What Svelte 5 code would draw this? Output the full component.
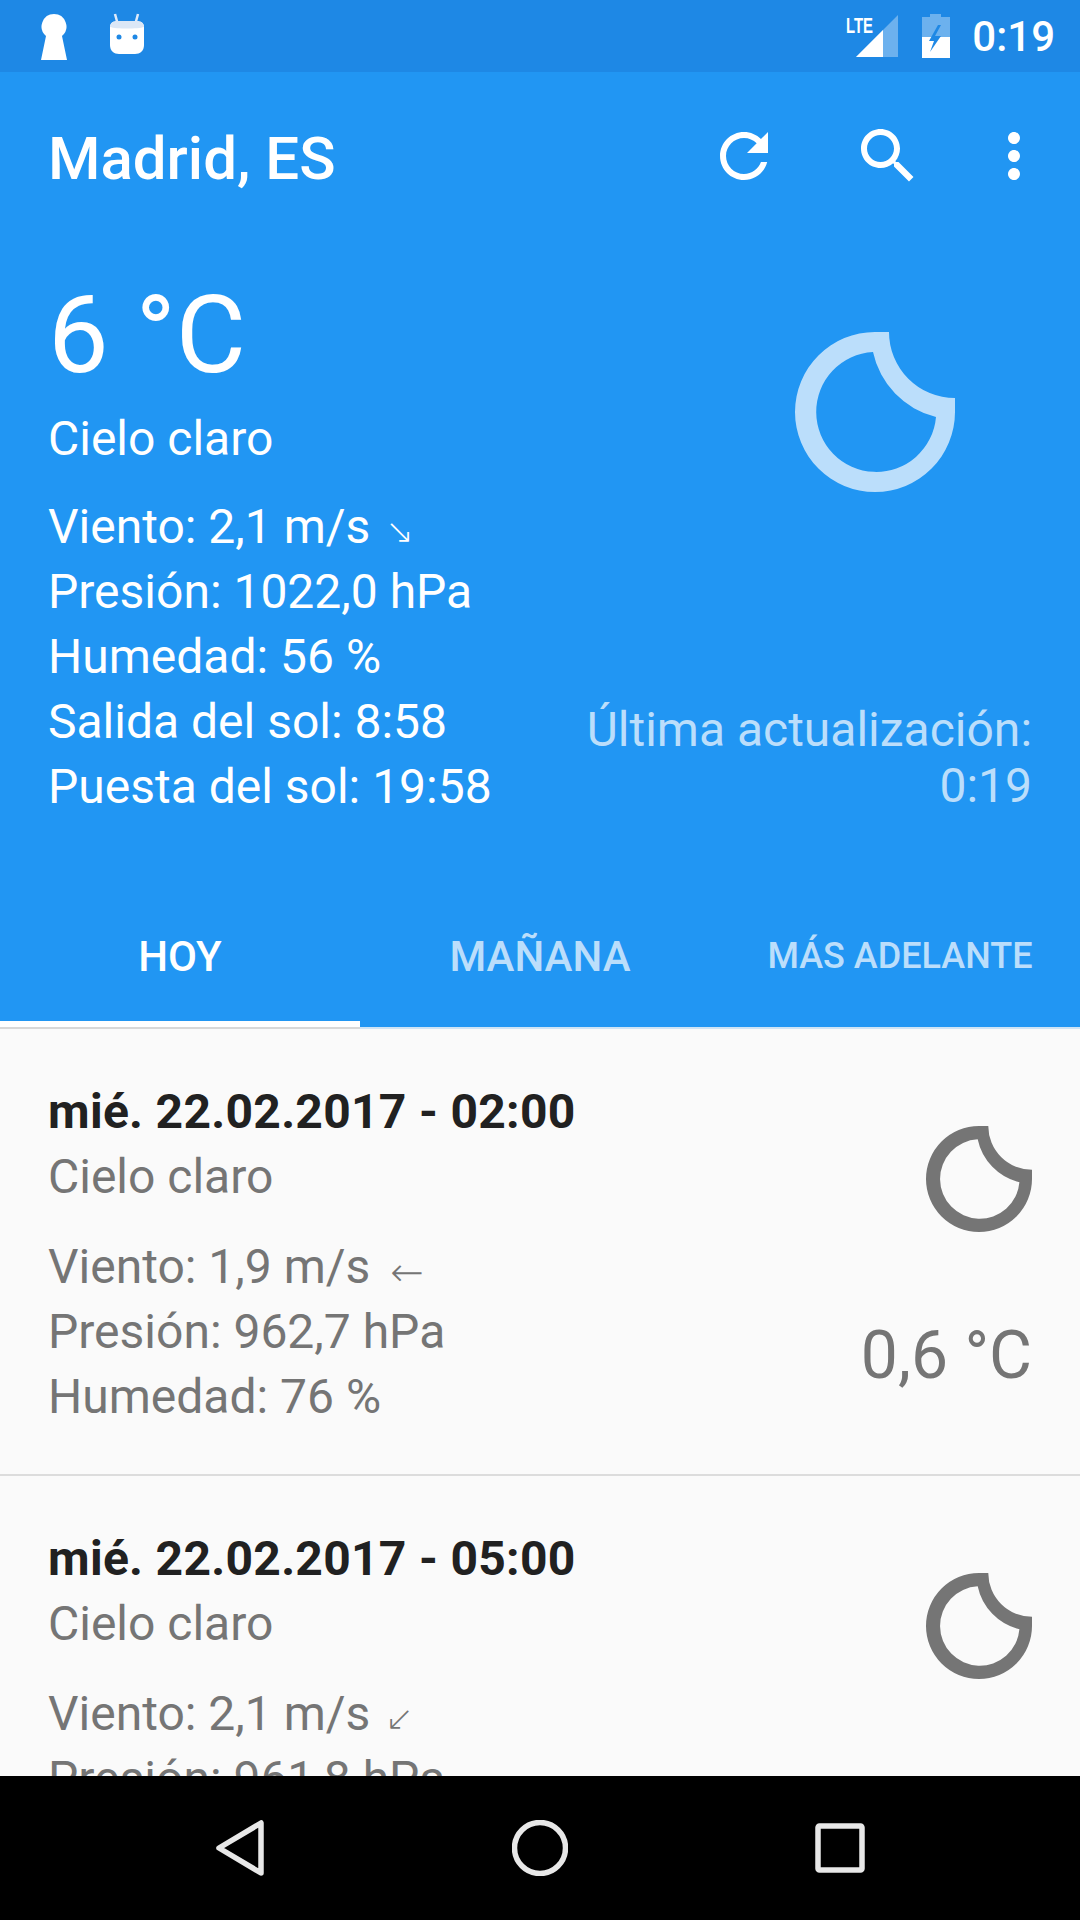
<script>
    const rows = [
        { date: 'mié. 22.02.2017 - 02:00', sky: 'Cielo claro', wind: 'Viento: 1,9 m/s', arrow: '←', press: 'Presión: 962,7 hPa', hum: 'Humedad: 76 %', temp: '0,6 °C' },
        { date: 'mié. 22.02.2017 - 05:00', sky: 'Cielo claro', wind: 'Viento: 2,1 m/s', arrow: '↙', press: 'Presión: 961,8 hPa', hum: 'Humedad: 76 %', temp: '' }
    ];
    const moon = 'M94 0H80A80 80 0 1 0 160 80V66A66 66 0 0 1 94 0ZM78 20A60 60 0 1 0 141 85A85 85 0 0 1 78 20Z';
</script>

<div class="screen">
    <div class="statusbar">
        <svg class="keyhole" width="28" height="48" viewBox="0 0 28 48"><path d="M14 1a12.500 12.500 0 0 1 8 22l5 24H1L6 23A12.500 12.500 0 0 1 14 1Z" fill="#fff" /></svg>
        <svg class="android" width="36" height="42" viewBox="0 0 36 42">
            <path d="M6 1l3 11M29 1l-3 11" stroke="#dfeafa" stroke-width="2.500" />
            <path d="M9 8h18c5 0 8 2 8 6v18c0 6-4 9-9 9H10c-5 0-9-3-9-9V14c0-4 3-6 8-6Z" fill="#fff" />
            <path d="M1 14c0-4 3-6 8-6h18c5 0 8 2 8 6-6 2-28 2-34 0Z" fill="#dbe7f6" />
            <circle cx="10" cy="24" r="2.500" fill="#1e88e5" /><circle cx="26" cy="24" r="2.500" fill="#1e88e5" />
        </svg>
        <span class="spacer"></span>
        <svg class="signal" width="56" height="44" viewBox="0 0 56 44">
            <text x="1" y="19" textLength="27" lengthAdjust="spacingAndGlyphs" class="lte">LTE</text>
            <path d="M53 1V43H11Z" fill="#fff" fill-opacity=".35" />
            <path d="M38 16V43H11Z" fill="#fff" />
        </svg>
        <svg class="battery" width="30" height="44" viewBox="0 0 30 44">
            <path d="M9 0h11v3h9v41H1V3h8Z" fill="#fff" fill-opacity=".35" />
            <path d="M1 23h28v21H1Z" fill="#fff" />
            <path d="M17 11L8 27h5L9 38l11-16h-6l6-11Z" fill="#1e88e5" />
        </svg>
        <span class="clock">0:19</span>
    </div>

    <header class="appheader">
        <div class="toolbar">
            <h1>Madrid, ES</h1>
            <button aria-label="Actualizar"><svg width="72" height="72" viewBox="0 0 24 24"><path fill="#fff" d="M17.65 6.35C16.2 4.9 14.21 4 12 4c-4.42 0-7.99 3.58-7.99 8s3.57 8 7.99 8c3.73 0 6.84-2.55 7.73-6h-2.08c-.82 2.33-3.04 4-5.65 4-3.31 0-6-2.69-6-6s2.69-6 6-6c1.66 0 3.14.69 4.22 1.78L13 11h7V4l-2.350 2.350z" /></svg></button>
            <button aria-label="Buscar"><svg width="72" height="72" viewBox="0 0 24 24"><path fill="#fff" d="M15.500 14h-.79l-.28-.27C15.410 12.590 16 11.110 16 9.500 16 5.910 13.090 3 9.500 3S3 5.910 3 9.500 5.910 16 9.500 16c1.610 0 3.090-.59 4.230-1.570l.27.28v.79l5 4.990L20.490 19l-4.990-5zm-6 0C7.010 14 5 11.990 5 9.500S7.010 5 9.500 5 14 7.010 14 9.500 11.990 14 9.500 14z" /></svg></button>
            <button class="more" aria-label="Más"><svg width="72" height="72" viewBox="0 0 24 24"><path fill="#fff" d="M12 8c1.100 0 2-.9 2-2s-.9-2-2-2-2 .9-2 2 .9 2 2 2zm0 2c-1.100 0-2 .9-2 2s.9 2 2 2 2-.9 2-2-.9-2-2-2zm0 6c-1.100 0-2 .9-2 2s.9 2 2 2 2-.9 2-2-.9-2-2-2z" /></svg></button>
        </div>

        <div class="current">
            <div class="readings">
                <div class="temp">6 °C</div>
                <div class="sky">Cielo claro</div>
                <div class="lines">
                    <div>Viento: 2,1 m/s <span class="arrow">↘</span></div>
                    <div>Presión: 1022,0 hPa</div>
                    <div>Humedad: 56 %</div>
                    <div>Salida del sol: 8:58</div>
                    <div>Puesta del sol: 19:58</div>
                </div>
            </div>
            <div class="side">
                <svg width="160" height="160" viewBox="0 0 160 160"><path d={moon} fill="#bbdefb" fill-rule="evenodd" /></svg>
                <div class="updated">Última actualización:<br />0:19</div>
            </div>
        </div>

        <nav class="tabs">
            <span class="tab active">HOY</span>
            <span class="tab">MAÑANA</span>
            <span class="tab small">MÁS ADELANTE</span>
        </nav>
    </header>
    <div class="tabline"></div>

    <main class="list">
        {#each rows as row}
            <article class="card">
                <div class="info">
                    <div class="date">{row.date}</div>
                    <div class="sky2">{row.sky}</div>
                    <div class="lines">
                        <div>{row.wind} <span class="arrow" class:west={row.arrow === '←'}>{row.arrow}</span></div>
                        <div>{row.press}</div>
                        <div>{row.hum}</div>
                    </div>
                </div>
                <div class="cardside">
                    <svg width="106" height="106" viewBox="0 0 160 160"><path d={moon} fill="#757575" fill-rule="evenodd" /></svg>
                    {#if row.temp}
                        <div class="cardtemp">{row.temp}</div>
                    {/if}
                </div>
            </article>
        {/each}
    </main>

    <footer class="navbar">
        <span class="navkey"><svg width="48" height="56" viewBox="0 0 48 56"><path d="M45 3V53L3 28Z" fill="none" stroke="#e8e8e8" stroke-width="5.500" stroke-linejoin="round" /></svg></span>
        <span class="navkey"><svg width="56" height="56" viewBox="0 0 56 56"><circle cx="28" cy="28" r="25.500" fill="none" stroke="#e8e8e8" stroke-width="5.500" /></svg></span>
        <span class="navkey"><svg width="50" height="50" viewBox="0 0 50 50"><rect x="3" y="3" width="44" height="44" rx="1.500" fill="none" stroke="#e8e8e8" stroke-width="5.500" /></svg></span>
    </footer>
</div>

<style>
    :global(body) {
        margin: 0;
        font-family: Roboto, sans-serif;
    }
    .screen {
        width: 1080px;
        height: 1920px;
        display: flex;
        flex-direction: column;
        overflow: hidden;
        background: #fafafa;
    }

    .statusbar {
        height: 72px;
        flex: none;
        display: flex;
        align-items: flex-start;
        background: #1e88e5;
        box-sizing: border-box;
        padding: 13px 25px 0 40px;
    }
    .android {
        margin-left: 41px;
    }
    .spacer {
        flex: 1;
    }
    .signal {
        margin-top: 1px;
    }
    .lte {
        font: 700 22px "Liberation Sans", sans-serif;
        fill: #fff;
    }
    .battery {
        margin: 1px 0 0 20px;
    }
    .clock {
        margin: 0 0 0 21px;
        color: #fff;
        font-size: 42px;
        font-weight: 500;
        line-height: 48px;
    }

    .appheader {
        flex: none;
        height: 955px;
        display: flex;
        flex-direction: column;
        background: #2196f3;
        color: #fff;
    }
    .toolbar {
        height: 168px;
        flex: none;
        display: flex;
        align-items: center;
        padding: 0 12px 0 48px;
    }
    h1 {
        flex: 1;
        margin: 0;
        padding-top: 4px;
        font-size: 60px;
        font-weight: 500;
    }
    button {
        width: 144px;
        height: 144px;
        display: flex;
        align-items: center;
        justify-content: center;
        padding: 0;
        border: none;
        background: none;
    }
    .more {
        width: 108px;
    }

    .current {
        flex: 1;
        display: flex;
        justify-content: space-between;
        padding: 30px 48px 0;
    }
    .temp {
        font-size: 108px;
        line-height: 130px;
    }
    .sky {
        font-size: 48px;
        line-height: 64px;
        margin-top: 7px;
    }
    .lines {
        margin-top: 25px;
        font-size: 48px;
        line-height: 65px;
    }
    .readings .lines {
        margin-top: 23px;
    }
    .arrow {
        margin-left: 3px;
        font-family: "DejaVu Sans Light", "DejaVu Sans", sans-serif;
        font-size: 34px;
        font-weight: 200;
        line-height: 1;
    }
    .west {
        margin-left: 8px;
        font-size: 40px;
        position: relative;
        top: 3px;
    }
    .side {
        display: flex;
        flex-direction: column;
        align-items: flex-end;
        justify-content: space-between;
    }
    .side svg {
        margin: 62px 77px 0 0;
    }
    .updated {
        color: #bbdefb;
        font-size: 48px;
        line-height: 56px;
        text-align: right;
        margin-bottom: 69px;
    }

    .tabs {
        height: 144px;
        flex: none;
        display: flex;
    }
    .tab {
        flex: 1;
        display: flex;
        align-items: center;
        justify-content: center;
        box-sizing: border-box;
        padding-top: 2px;
        color: #bbdefb;
        font-size: 42px;
        font-weight: 500;
    }
    .small {
        font-size: 36px;
    }
    .active {
        color: #fff;
        border-bottom: 6px solid #fff;
        padding-top: 8px;
    }
    .tabline {
        height: 2px;
        flex: none;
        background: linear-gradient(to right, #d8d8d8 360px, #cfe4f5 360px);
    }

    .list {
        flex: 1;
        min-height: 0;
        overflow: hidden;
    }
    .card {
        height: 447px;
        box-sizing: border-box;
        display: flex;
        justify-content: space-between;
        padding: 50px 48px 0;
        border-bottom: 2px solid #dcdcdc;
        color: #757575;
    }
    .date {
        color: #212121;
        font-size: 48px;
        font-weight: 700;
        line-height: 65px;
        letter-spacing: 0.3px;
    }
    .sky2 {
        font-size: 48px;
        line-height: 65px;
    }
    .cardside {
        display: flex;
        flex-direction: column;
        align-items: flex-end;
        padding-top: 47px;
    }
    .cardtemp {
        margin-top: 85px;
        font-size: 66px;
    }

    .navbar {
        height: 144px;
        flex: none;
        display: flex;
        justify-content: center;
        background: #000;
    }
    .navkey {
        width: 300px;
        display: flex;
        align-items: center;
        justify-content: center;
    }
</style>
